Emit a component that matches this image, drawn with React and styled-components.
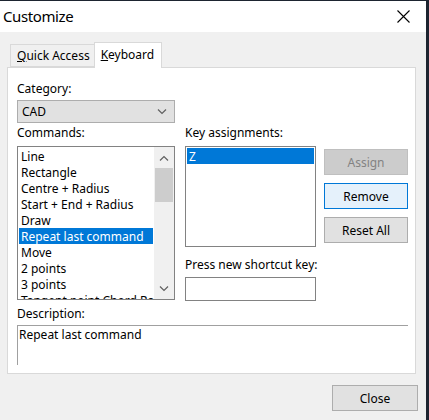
import React from 'react'
import styled, { createGlobalStyle } from 'styled-components'

const GlobalStyle = createGlobalStyle`
    html, body {
        margin: 0;
        padding: 0;
        background-color: #1d2430;
    }
    body {
        font-family: 'Noto Sans', 'Open Sans', sans-serif;
        font-size: 12px;
        color: #000000;
    }
`;

const commands = [
    'Line',
    'Rectangle',
    'Centre + Radius',
    'Start + End + Radius',
    'Draw',
    'Repeat last command',
    'Move',
    '2 points',
    '3 points',
    'Tangent point Chord Radius',
]

const Chevron = ({ up }) => (
    <svg width='10' height='6' viewBox='0 0 10 6'>
        <path
            d={up ? 'M1 5.5 L5 1.5 L9 5.5' : 'M1 0.5 L5 4.5 L9 0.5'}
            fill='none'
            stroke='#606060'
            strokeWidth='1.2'
        />
    </svg>
)

const App = () => {
    return (
        <>
            <GlobalStyle />
            <Dialog>
                <TitleBar>
                    <Title>Customize</Title>
                    <CloseIcon>
                        <svg width='13' height='13' viewBox='0 0 13 13'>
                            <path d='M0.5 0.5 L12.5 12.5 M12.5 0.5 L0.5 12.5' stroke='#000000' strokeWidth='1.1' />
                        </svg>
                    </CloseIcon>
                </TitleBar>
                <Body>
                    <Tabs>
                        <Tab><u>Q</u>uick Access</Tab>
                        <Tab active><u>K</u>eyboard</Tab>
                    </Tabs>
                    <Panel>
                        <Label gap={4}>Category:</Label>
                        <Combo>
                            <span>CAD</span>
                            <Chevron />
                        </Combo>
                        <Columns>
                            <LeftColumn>
                                <Label>Commands:</Label>
                                <ListBox height={154}>
                                    <Items>
                                        {commands.map((c) => (
                                            <Item key={c} selected={c === 'Repeat last command'}>{c}</Item>
                                        ))}
                                    </Items>
                                    <ScrollBar>
                                        <ArrowButton><Chevron up /></ArrowButton>
                                        <Track>
                                            <Thumb />
                                        </Track>
                                        <ArrowButton><Chevron /></ArrowButton>
                                    </ScrollBar>
                                </ListBox>
                            </LeftColumn>
                            <MiddleColumn>
                                <Label>Key assignments:</Label>
                                <ListBox height={101}>
                                    <Items>
                                        <Item selected>Z</Item>
                                    </Items>
                                </ListBox>
                                <Label top={10} gap={4}>Press new shortcut key:</Label>
                                <TextInput />
                            </MiddleColumn>
                            <ButtonColumn>
                                <Button disabled>Assign</Button>
                                <Button focused>Remove</Button>
                                <Button>Reset All</Button>
                            </ButtonColumn>
                        </Columns>
                        <Label top={5} gap={3}>Description:</Label>
                        <Description>Repeat last command</Description>
                    </Panel>
                    <Footer>
                        <Button wide>Close</Button>
                    </Footer>
                </Body>
            </Dialog>
        </>
    )
}

export default App

const Dialog = styled.div`
    width: 426px;
    height: 419px;
    margin-top: 1px;
    background-color: #f0f0f0;
    display: flex;
    flex-direction: column;
`;

const TitleBar = styled.div`
    height: 31px;
    background-color: #ffffff;
    display: flex;
    align-items: center;
    justify-content: space-between;
    padding: 0 16px 0 3px;
`;

const Title = styled.span`
    font-size: 15px;
    letter-spacing: -0.4px;
    margin-top: -1px;
`;

const CloseIcon = styled.div`
    display: flex;
    align-items: center;
`;

const Body = styled.div`
    flex: 1;
    display: flex;
    flex-direction: column;
    padding: 9px 10px 0 7px;
`;

const Tabs = styled.div`
    display: flex;
    align-items: flex-end;
    height: 26px;
    padding-left: 3px;
`;

const Tab = styled.div`
    height: ${(p) => (p.active ? '26px' : '23px')};
    box-sizing: border-box;
    padding: ${(p) => (p.active ? '3px 7px 0 6px' : '2px 4px 0 6px')};
    background-color: ${(p) => (p.active ? '#ffffff' : '#f0f0f0')};
    border: 1px solid #d9d9d9;
    border-bottom: ${(p) => (p.active ? 'none' : '1px solid #d9d9d9')};
    border-right: ${(p) => (p.active ? '1px solid #d9d9d9' : 'none')};
    margin-bottom: ${(p) => (p.active ? '-1px' : '0')};
    position: relative;
    z-index: ${(p) => (p.active ? 1 : 0)};
    line-height: 18px;
`;

const Panel = styled.div`
    height: 307px;
    box-sizing: border-box;
    background-color: #ffffff;
    border: 1px solid #d9d9d9;
    padding: 13px 8px 0 9px;
    display: flex;
    flex-direction: column;
`;

const Label = styled.div`
    line-height: 16px;
    height: 16px;
    margin-top: ${(p) => p.top || 0}px;
    margin-bottom: ${(p) => (p.gap === undefined ? 5 : p.gap)}px;
    white-space: nowrap;
`;

const Combo = styled.div`
    width: 158px;
    height: 23px;
    box-sizing: border-box;
    background-color: #e1e1e1;
    border: 1px solid #adadad;
    display: flex;
    align-items: center;
    justify-content: space-between;
    padding: 0 7px 0 4px;
    margin-top: -1px;
    margin-bottom: 2px;
`;

const Columns = styled.div`
    display: flex;
    gap: 10px;
`;

const LeftColumn = styled.div`
    width: 158px;
    display: flex;
    flex-direction: column;
`;

const MiddleColumn = styled.div`
    width: 131px;
    display: flex;
    flex-direction: column;
`;

const ButtonColumn = styled.div`
    display: flex;
    flex-direction: column;
    gap: 8px;
    padding-top: 24px;
    margin-left: -2px;
`;

const ListBox = styled.div`
    height: ${(p) => p.height}px;
    box-sizing: border-box;
    border: 1px solid #828282;
    background-color: #ffffff;
    display: flex;
    overflow: hidden;
`;

const Items = styled.div`
    flex: 1;
    padding: 1px 1px 0 1px;
    overflow: hidden;
`;

const Item = styled.div`
    height: 16px;
    box-sizing: border-box;
    padding: 1px 0 0 2px;
    line-height: 15px;
    white-space: nowrap;
    background-color: ${(p) => (p.selected ? '#0078d7' : 'transparent')};
    color: ${(p) => (p.selected ? '#ffffff' : '#000000')};
`;

const ScrollBar = styled.div`
    width: 20px;
    background-color: #f0f0f0;
    display: flex;
    flex-direction: column;
`;

const ArrowButton = styled.div`
    height: 21px;
    display: flex;
    align-items: center;
    justify-content: center;
`;

const Track = styled.div`
    flex: 1;
`;

const Thumb = styled.div`
    height: 34px;
    margin: 0 1px;
    background-color: #cdcdcd;
`;

const TextInput = styled.div`
    height: 24px;
    box-sizing: border-box;
    border: 1px solid #828282;
    background-color: #ffffff;
`;

const Button = styled.div`
    width: ${(p) => (p.wide ? '86px' : '84px')};
    height: 26px;
    box-sizing: border-box;
    display: flex;
    align-items: center;
    justify-content: center;
    border: 1px solid ${(p) => (p.focused ? '#0078d7' : p.disabled ? '#bfbfbf' : '#adadad')};
    background-color: ${(p) => (p.focused ? '#e5f1fb' : p.disabled ? '#cccccc' : '#e1e1e1')};
    color: ${(p) => (p.disabled ? '#838383' : '#000000')};
`;

const Description = styled.div`
    width: 391px;
    height: 40px;
    box-sizing: border-box;
    border-top: 1px solid #a0a0a0;
    border-left: 1px solid #a0a0a0;
    padding: 1px 0 0 1px;
    line-height: 16px;
`;

const Footer = styled.div`
    display: flex;
    justify-content: flex-end;
    padding-top: 11px;
    margin-right: -2px;
`;
